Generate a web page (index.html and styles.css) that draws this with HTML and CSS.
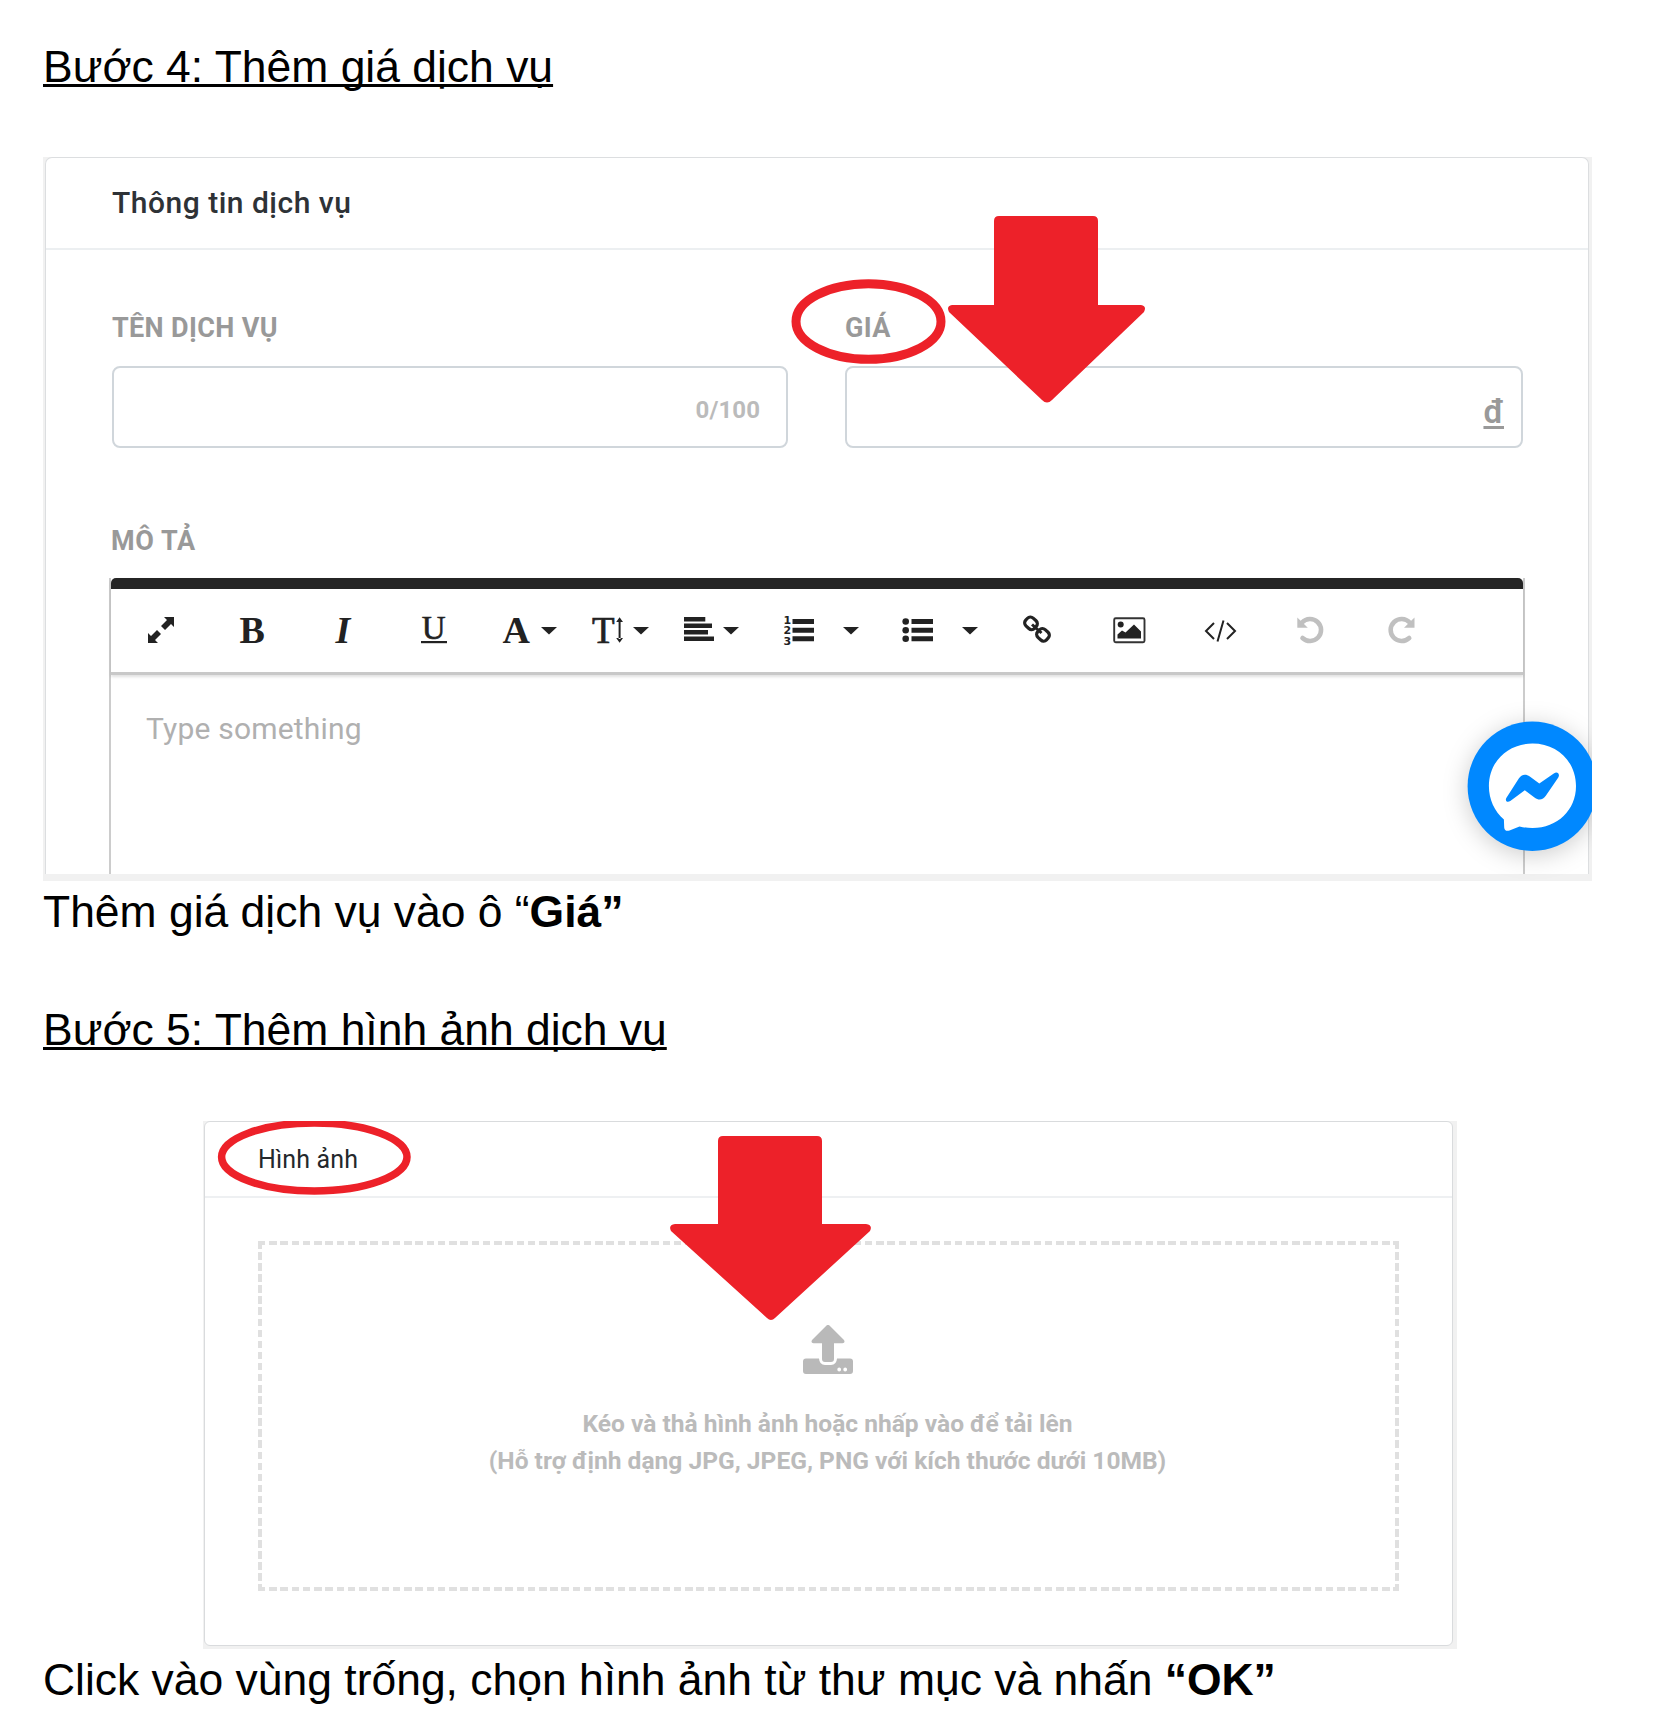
FILE: index.html
```html
<!DOCTYPE html>
<html lang="vi">
<head>
<meta charset="utf-8">
<title>Thêm dịch vụ</title>
<link rel="stylesheet" href="styles.css">
</head>
<body>
<main class="doc">
  <h2 class="step">Bước 4: Thêm giá dịch vụ</h2>

  <section class="shot shot-info">
    <div class="card">
      <header class="card-head">Thông tin dịch vụ</header>
      <div class="card-body">
        <div class="fields">
          <div class="field">
            <label class="label">TÊN DỊCH VỤ</label>
            <div class="input"><span class="count">0/100</span></div>
          </div>
          <div class="field">
            <label class="label">GIÁ</label>
            <div class="input"><span class="unit">đ</span></div>
          </div>
        </div>
        <label class="label label-desc">MÔ TẢ</label>
        <div class="editor">
          <div class="toolbar">
            <svg width="91" height="83" viewBox="115 589 91 83"><path d="M164 617h10v10l-3-3-6 6-4-4 6-6zM148 643v-10l3 3 6-6 4 4-6 6 3 3z"/></svg>
            <svg width="91" height="83" viewBox="206 589 91 83"><text x="239.500" y="643" class="glyph bold">B</text></svg>
            <svg width="92" height="83" viewBox="297 589 92 83"><text x="335.500" y="643" class="glyph bold italic">I</text></svg>
            <svg width="91" height="83" viewBox="389 589 91 83"><text x="421.800" y="638.500" class="glyph under">U</text><path d="M421 641h26v2.200h-26z"/></svg>
            <svg width="91" height="83" viewBox="480 589 91 83"><text x="502.500" y="643" class="glyph bold">A</text><path d="M541 627h16l-8 7.500z"/></svg>
            <svg width="91" height="83" viewBox="571 589 91 83"><text x="592" y="643" class="glyph tee">T</text><path d="M618.600 621h2v18h-2zM616.200 622l3.400-4.800 3.400 4.800zM616.200 638l3.400 4.800 3.400-4.800zM633 627h16l-8 7.500z"/></svg>
            <svg width="91" height="83" viewBox="662 589 91 83"><path d="M684 617h21.300v4.500H684zM684 623.500h28v4.500h-28zM684 630h24v4.500h-24zM684 636.500h30v4.500h-30zM723 627h16l-8 7.500z"/></svg>
            <svg width="117" height="83" viewBox="753 589 117 83"><text x="783.500" y="623.500" class="num">1</text><text x="783.500" y="634.300" class="num">2</text><text x="783.500" y="645" class="num">3</text><path d="M792.500 619h21.500v5h-21.500zM792.500 627.700h21.500v5h-21.500zM792.500 636.200h21.500v5h-21.500zM843 627h16l-8 7.500z"/></svg>
            <svg width="120" height="83" viewBox="870 589 120 83"><circle cx="905.700" cy="621.500" r="3.300"/><circle cx="905.700" cy="630.200" r="3.300"/><circle cx="905.700" cy="638.700" r="3.300"/><path d="M911.500 619H933v5h-21.500zM911.500 627.700H933v5h-21.500zM911.500 636.200H933v5h-21.500zM962 627h16l-8 7.500z"/></svg>
            <svg width="93" height="83" viewBox="990 589 93 83" class="line"><rect x="-6" y="-5.300" width="12" height="10.600" rx="4" transform="translate(1031 623.300) rotate(43)" stroke-width="3.200"/><rect x="-6" y="-5.300" width="12" height="10.600" rx="4" transform="translate(1043 634.800) rotate(43)" stroke-width="3.200"/><path d="M1032 624.500l9.500 8.500" stroke-width="3"/></svg>
            <svg width="92" height="83" viewBox="1083 589 92 83"><rect x="1114.200" y="618.200" width="30.300" height="24" rx="1.500" fill="none" stroke="#333" stroke-width="1.900"/><circle cx="1120.700" cy="624.500" r="3"/><path d="M1117.500 638.500v-4l4.500-4 3.500 2 8.500-8 7 7v7z"/></svg>
            <svg width="91" height="83" viewBox="1175 589 91 83" class="line"><path d="M1214 623l-8 8 8 8M1227 623l8 8-8 8M1223.500 620.500l-6 21" stroke-width="2"/></svg>
            <svg width="90" height="83" viewBox="1266 589 90 83" class="line off"><path d="M1302 622.500a11 11 0 1 1 .500 15.500" stroke-width="4.600" stroke-linecap="round"/><path d="M1297.300 617.500v10.200h10.500z" fill="#c0c0c0" stroke="none"/></svg>
            <svg width="91" height="83" viewBox="1356 589 91 83" class="line off"><path d="M1409.700 622.500a11 11 0 1 0 -.500 15.500" stroke-width="4.600" stroke-linecap="round"/><path d="M1414.500 617.500v10.200h-10.500z" fill="#c0c0c0" stroke="none"/></svg>
          </div>
          <div class="editor-area">Type something</div>
        </div>
      </div>
    </div>
    <svg class="marks" width="1549" height="724" viewBox="43 157 1549 724">
      <ellipse cx="868.500" cy="321.500" rx="72.500" ry="37.800" fill="none" stroke="#ed2129" stroke-width="9"/>
      <path d="M999 216h94q5 0 5 5v84h43q6 1 3 7l-92 88q-5 5-10 0l-93-88q-3-6 3-7h42v-84q0-5 5-5z" fill="#ed2129"/>
      <circle cx="1532.300" cy="786.300" r="64.700" fill="#0088ff" class="chat"/>
      <path d="M1532.500 743.500c25 0 43.500 18.500 43.500 42.500s-18.500 42-43.500 42q-7 0-13-1.600l-10 4c-3 1-5 0-5.300-3l-.300-8c-9.500-8-15-20-15-33.400 0-24 18.600-42.500 43.600-42.500z" fill="#fff"/>
      <path d="M1506.300 798l12.500-19.500c2.500-4.200 7-5 11-2l9.500 7 14.500-10c3.500-2.500 6.500.500 4.500 4l-12.500 18.300c-2.500 4-7 5-11 2l-10-7.500-14.500 10.700c-3 2-5.500 0-4-3z" fill="#0088ff"/>
    </svg>
  </section>

  <p class="text text-price">Thêm giá dịch vụ vào ô “<b>Giá”</b></p>

  <h2 class="step step-5">Bước 5: Thêm hình ảnh dịch vụ</h2>

  <section class="shot shot-image">
    <div class="card">
      <header class="card-head">Hình ảnh</header>
      <div class="drop">
        <svg class="upload" width="50" height="50" viewBox="803 1325 50 50"><path d="M826.500 1325.500q1.500-1.200 3 0l14.500 14.500q1.500 3-1.500 3.300h-8.500v15.700q0 3-3 3h-6q-3 0-3-3v-15.700h-8.500q-3-.300-1.500-3.300z"/><path fill-rule="evenodd" d="M806 1358.500h13q.500 6.500 6 6.500h6q5.500 0 6-6.500h13q3 0 3 3V1371q0 3-3 3h-44q-3 0-3-3v-9.500q0-3 3-3zM837.300 1369.500a1.900 1.900 0 1 0 3.800 0a1.900 1.900 0 1 0-3.800 0zM843.300 1369.500a1.900 1.900 0 1 0 3.800 0a1.900 1.900 0 1 0-3.800 0z"/></svg>
        <p class="hint">Kéo và thả hình ảnh hoặc nhấp vào để tải lên</p>
        <p class="hint">(Hỗ trợ định dạng JPG, JPEG, PNG với kích thước dưới 10MB)</p>
      </div>
    </div>
    <svg class="marks" width="1254" height="528" viewBox="203 1121 1254 528">
      <ellipse cx="314.300" cy="1157" rx="92.700" ry="34" fill="none" stroke="#ed2129" stroke-width="7.500"/>
      <path d="M723 1136h94q5 0 5 5v83h44q7 1 4 7l-95 87q-4 4-8 0l-96-87q-3-6 4-7h43v-83q0-5 5-5z" fill="#ed2129"/>
    </svg>
  </section>

  <p class="text text-click">Click vào vùng trống, chọn hình ảnh từ thư mục và nhấn <b>“OK”</b></p>
</main>
</body>
</html>
```
FILE: styles.css
```css
* { box-sizing: border-box; }
body { margin: 0; background: #fff; }
.doc {
  width: 1653px;
  height: 1732px;
  padding: 41px 61px 0 43px;
  overflow: hidden;
  font-family: "Liberation Sans", Arial, sans-serif;
  color: #000;
}
.step, .text {
  margin: 0;
  font-size: 44.45px;
  line-height: 52px;
  font-weight: 400;
  white-space: nowrap;
}
.step {
  text-decoration: underline;
  text-decoration-thickness: 3px;
  text-decoration-skip-ink: none;
  text-underline-offset: 2px;
}
.shot { position: relative; overflow: hidden; background: #f1f1f1; }
.card { background: #fff; font-family: Roboto, sans-serif; }
.marks { position: absolute; left: 0; top: 0; }

.shot-info { margin-top: 64px; height: 724px; padding: 0 3px 7px 2px; }
.shot-info .card {
  height: 717px;
  border: 1px solid #dcdee0;
  border-bottom: 0;
  border-radius: 7px 7px 0 0;
}
.shot-info .card-head {
  height: 92px;
  padding: 27px 0 0 66px;
  border-bottom: 2px solid #eceff1;
  font-size: 30px;
  line-height: 36px;
  font-weight: 500;
  letter-spacing: .5px;
  color: #2e3236;
}
.card-body { padding: 61px 63px 0 64px; }
.fields { display: grid; grid-template-columns: 676px 678px; gap: 57px; padding-left: 2px; }
.label {
  display: block;
  height: 55px;
  padding-top: 1px;
  font-size: 27px;
  line-height: 32px;
  font-weight: 700;
  letter-spacing: .35px;
  color: #999;
}
.input {
  display: flex;
  justify-content: flex-end;
  height: 82px;
  border: 2px solid #d0d6db;
  border-radius: 8px;
  color: #999;
}
.count { padding: 28px 26px 0 0; font-size: 24px; line-height: 28px; font-weight: 700; letter-spacing: .1px; color: #bbb; }
.unit {
  align-self: flex-start;
  margin: 28px 17px 0 0;
  font-size: 33px;
  line-height: 32px;
  font-weight: 600;
  text-decoration: underline;
  text-decoration-thickness: 3px;
  text-underline-offset: 2.5px;
}
.label-desc { margin-top: 76px; height: 54px; padding-left: 1px; letter-spacing: .6px; }
.editor { height: 296px; margin-left: -1px; border: solid #ccc; border-width: 0 2px; }
.toolbar {
  display: flex;
  height: 97px;
  padding-left: 4px;
  border-top: 11px solid #252525;
  border-bottom: 3px solid #c8c8c8;
  border-radius: 5px 5px 0 0;
  box-shadow: 0 2px 3px rgba(0, 0, 0, .12);
}
.toolbar svg { flex: none; display: block; fill: #222; }
.toolbar .line { fill: none; stroke: #222; }
.toolbar .off { stroke: #c0c0c0; }
.glyph { font-family: "Liberation Serif", serif; font-size: 38px; }
.bold { font-weight: 700; }
.italic { font-style: italic; }
.under { font-size: 33px; stroke: #222; stroke-width: .6px; }
.tee { font-size: 37px; stroke: #222; stroke-width: .7px; }
.num { font-family: "DejaVu Sans", sans-serif; font-size: 11px; font-weight: 700; }
.editor-area { padding: 36px 0 0 35px; font-size: 30px; line-height: 36px; letter-spacing: .2px; color: #b0b0b0; }
.chat { filter: drop-shadow(0 4px 12px rgba(0, 0, 0, .2)); }

.text-price { margin-top: 5px; }
.step-5 { margin-top: 66px; }

.shot-image { width: 1254px; height: 528px; margin: 65px 0 0 160px; padding: 0 4px 3px 1px; }
.shot-image .card {
  height: 525px;
  border: 1px solid #d9dbdd;
  border-radius: 6px;
}
.shot-image .card-head {
  height: 76px;
  padding: 23px 0 0 53px;
  border-bottom: 2px solid #eef0f2;
  font-size: 25px;
  line-height: 30px;
  letter-spacing: .15px;
  color: #24282c;
}
.drop {
  width: 1141px;
  height: 350px;
  margin: 43px 0 0 53px;
  padding: 84px 2px 0 0;
  text-align: center;
  background:
    repeating-linear-gradient(90deg, #e0e0e0 0 7.500px, transparent 7.500px 11.240px) 0 0 / 100% 4px no-repeat,
    repeating-linear-gradient(90deg, #e0e0e0 0 7.500px, transparent 7.500px 11.240px) 0 100% / 100% 4px no-repeat,
    repeating-linear-gradient(180deg, #e0e0e0 0 7.500px, transparent 7.500px 11.080px) 0 0 / 4px 100% no-repeat,
    repeating-linear-gradient(180deg, #e0e0e0 0 7.500px, transparent 7.500px 11.080px) 100% 0 / 4px 100% no-repeat;
}
.upload { display: block; margin: 0 auto 31px; fill: #b9b9b9; }
.hint { margin: 0; font-size: 24.55px; line-height: 36.600px; font-weight: 700; color: #bbb; white-space: nowrap; }
.text-click { margin-top: 5px; }
```
